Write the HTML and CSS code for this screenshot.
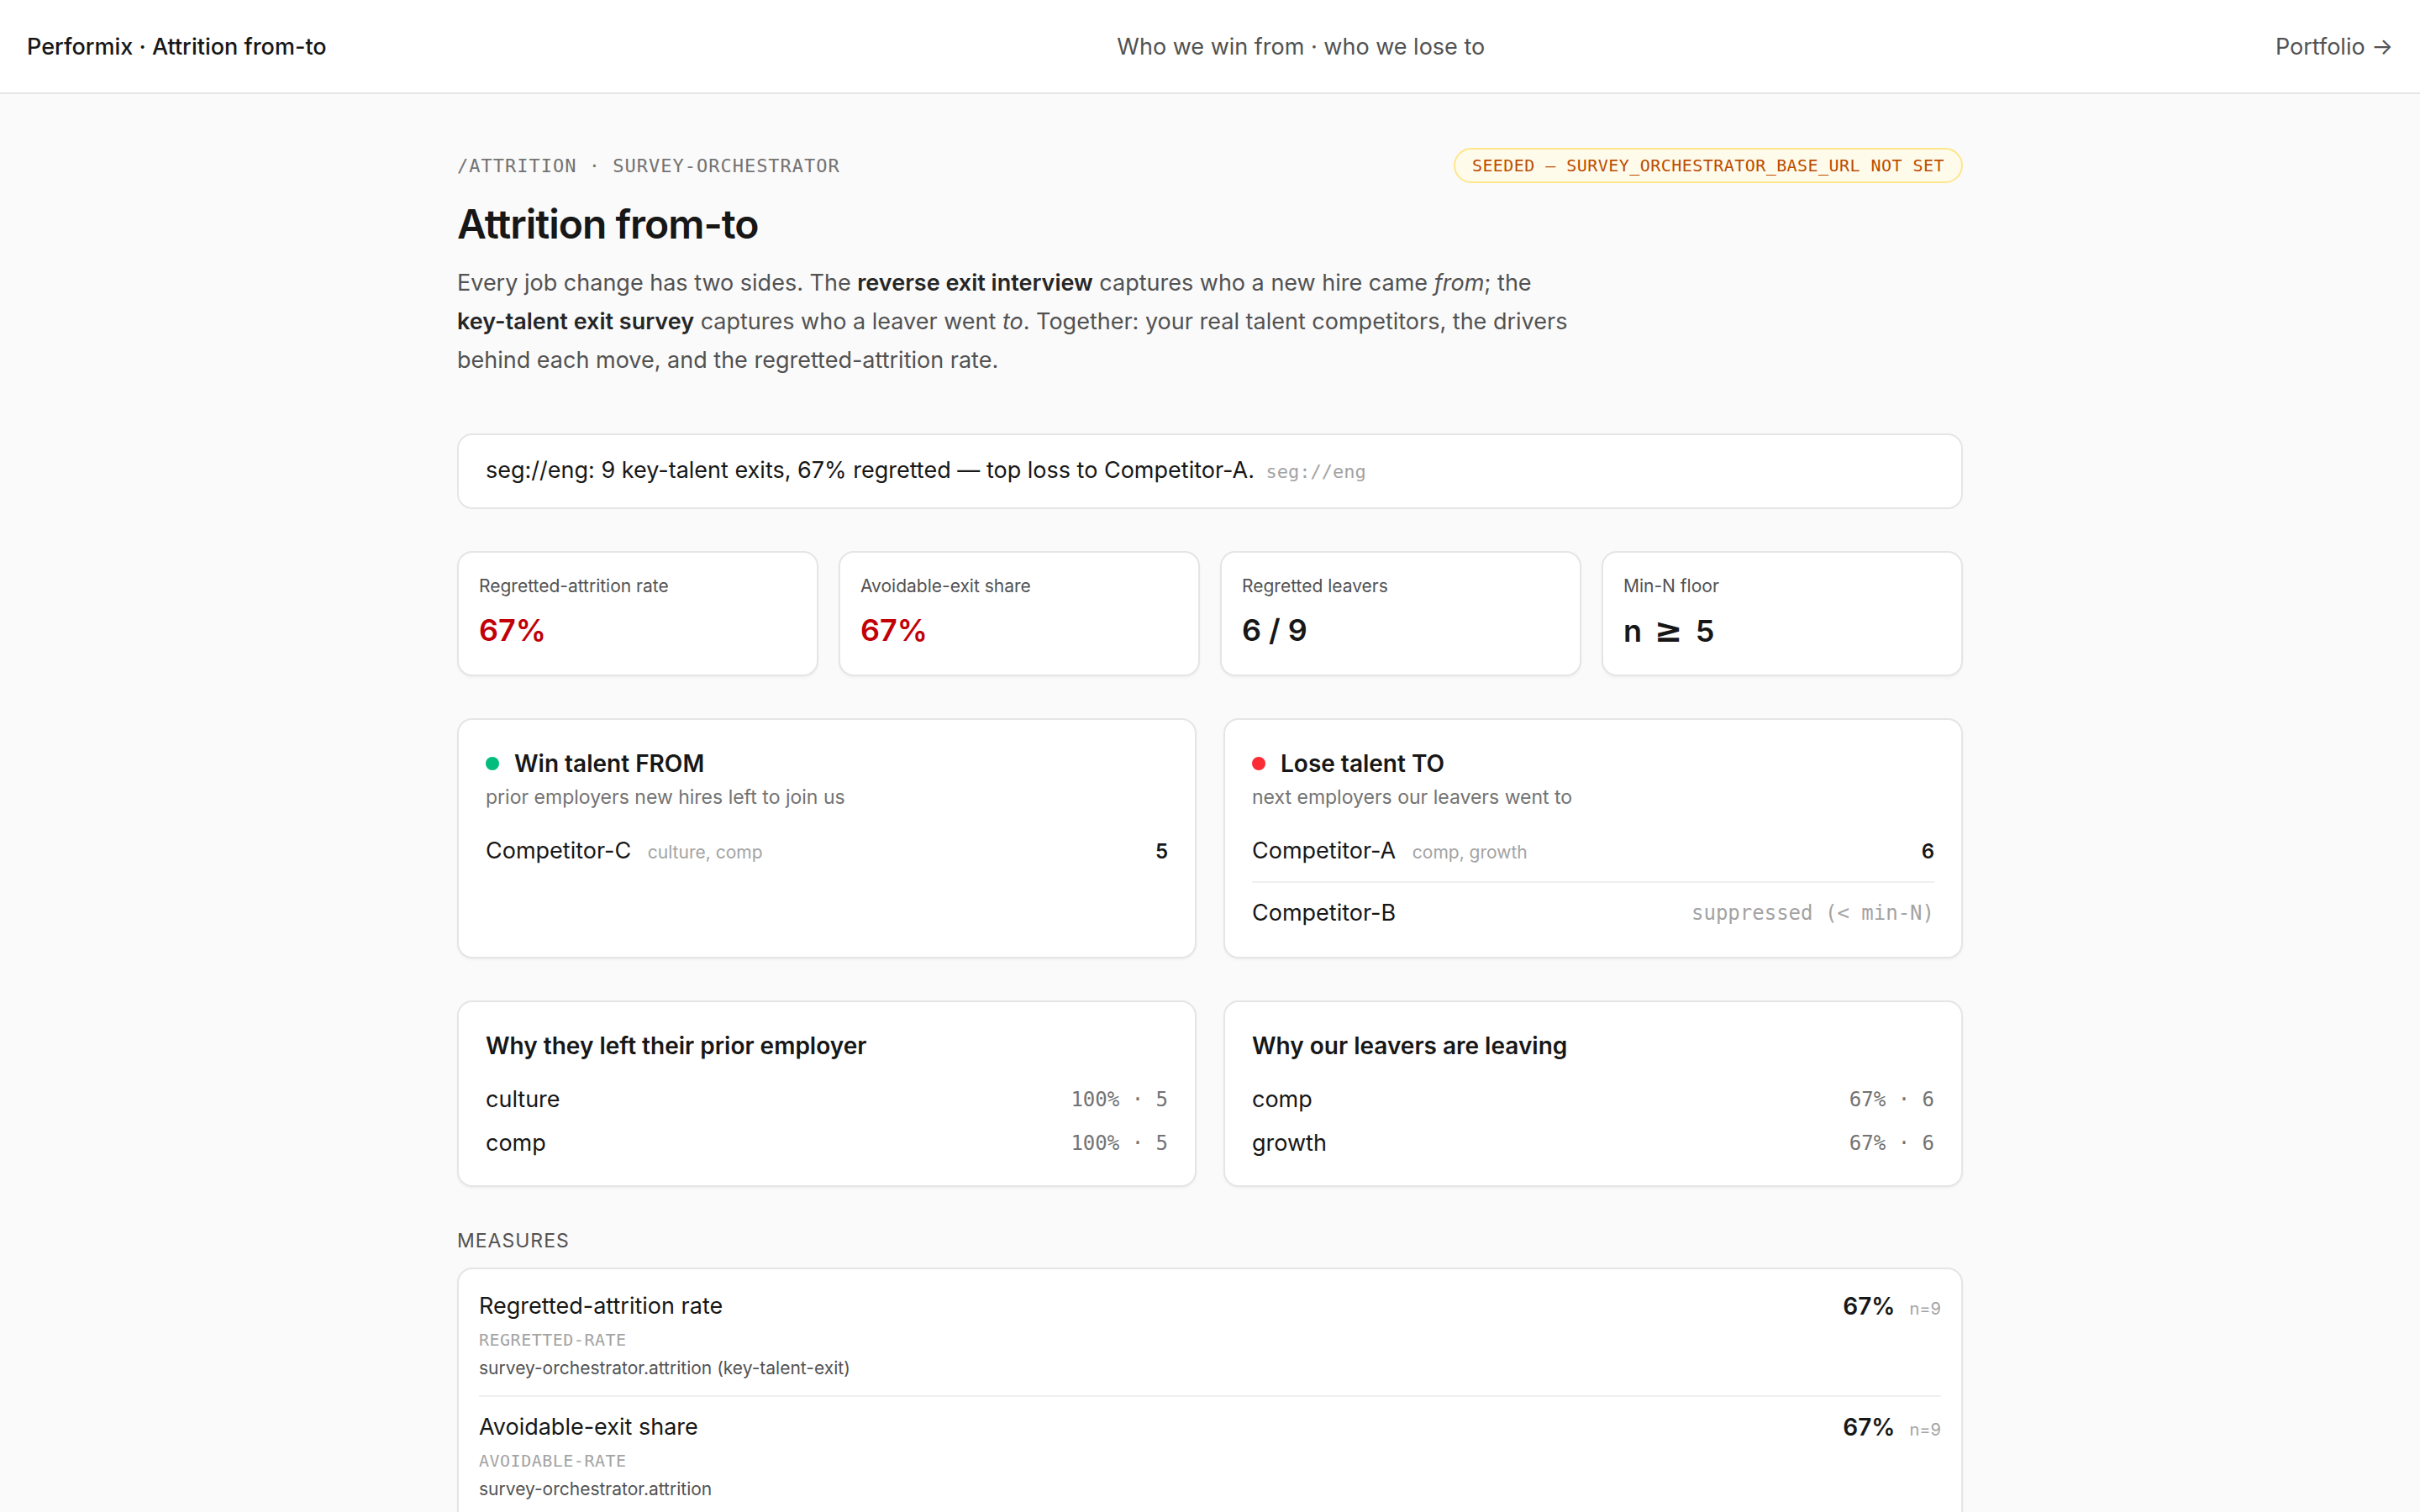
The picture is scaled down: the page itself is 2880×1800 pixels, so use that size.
FILE: index.html
```html
<!DOCTYPE html>
<html>
<head>
  <title>Performix · Attrition from-to</title>
  <link rel="stylesheet" href="styles.css">
</head>
<body>
  <header class="topbar">
    <div class="brand">Performix · Attrition from-to</div>
    <div class="tagline">Who we win from · who we lose to</div>
    <a class="back" href="#">Portfolio →</a>
  </header>

  <main class="page">
    <div class="crumbs">
      <span class="path">/attrition · survey-orchestrator</span>
      <span class="badge">seeded — SURVEY_ORCHESTRATOR_BASE_URL not set</span>
    </div>

    <h1>Attrition from-to</h1>
    <p class="lede">
      Every job change has two sides. The <b>reverse exit interview</b> captures who a new hire came <i>from</i>; the
      <b>key-talent exit survey</b> captures who a leaver went <i>to</i>. Together: your real talent competitors, the drivers
      behind each move, and the regretted-attrition rate.
    </p>

    <div class="summary">
      seg://eng: 9 key-talent exits, 67% regretted — top loss to Competitor-A.
      <span class="seg">seg://eng</span>
    </div>

    <!-- headline numbers -->
    <div class="kpis">
      <div class="kpi">
        <div class="kpi-label">Regretted-attrition rate</div>
        <div class="kpi-value bad">67%</div>
      </div>
      <div class="kpi">
        <div class="kpi-label">Avoidable-exit share</div>
        <div class="kpi-value bad">67%</div>
      </div>
      <div class="kpi">
        <div class="kpi-label">Regretted leavers</div>
        <div class="kpi-value">6 / 9</div>
      </div>
      <div class="kpi">
        <div class="kpi-label">Min-N floor</div>
        <div class="kpi-value">n <span class="ge">≥</span> 5</div>
      </div>
    </div>

    <!-- from / to -->
    <div class="pair">
      <div class="card">
        <div class="card-title"><span class="dot win"></span>Win talent FROM</div>
        <div class="card-sub">prior employers new hires left to join us</div>
        <ul class="list">
          <li>
            <span class="who">Competitor-C <span class="why">culture, comp</span></span>
            <span class="count">5</span>
          </li>
        </ul>
      </div>
      <div class="card">
        <div class="card-title"><span class="dot lose"></span>Lose talent TO</div>
        <div class="card-sub">next employers our leavers went to</div>
        <ul class="list">
          <li>
            <span class="who">Competitor-A <span class="why">comp, growth</span></span>
            <span class="count">6</span>
          </li>
          <li>
            <span class="who">Competitor-B</span>
            <span class="muted">suppressed (&lt; min-N)</span>
          </li>
        </ul>
      </div>
    </div>

    <!-- drivers -->
    <div class="pair">
      <div class="card">
        <div class="card-title">Why they left their prior employer</div>
        <div class="reasons">
          <div class="reason"><span>culture</span><span class="share">100% · 5</span></div>
          <div class="reason"><span>comp</span><span class="share">100% · 5</span></div>
        </div>
      </div>
      <div class="card">
        <div class="card-title">Why our leavers are leaving</div>
        <div class="reasons">
          <div class="reason"><span>comp</span><span class="share">67% · 6</span></div>
          <div class="reason"><span>growth</span><span class="share">67% · 6</span></div>
        </div>
      </div>
    </div>

    <h2 class="section">Measures</h2>
    <div class="measures">
      <div class="measure">
        <div>
          <div class="m-name">Regretted-attrition rate</div>
          <div class="m-key">regretted-rate</div>
          <div class="m-src">survey-orchestrator.attrition (key-talent-exit)</div>
        </div>
        <div class="m-val">67% <span class="m-n">n=9</span></div>
      </div>
      <div class="measure">
        <div>
          <div class="m-name">Avoidable-exit share</div>
          <div class="m-key">avoidable-rate</div>
          <div class="m-src">survey-orchestrator.attrition</div>
        </div>
        <div class="m-val">67% <span class="m-n">n=9</span></div>
      </div>
      <div class="measure">
        <div>
          <div class="m-name">Regretted leavers</div>
          <div class="m-key">regretted-count</div>
          <div class="m-src">survey-orchestrator.attrition</div>
        </div>
        <div class="m-val">6 <span class="m-n">n=9</span></div>
      </div>
    </div>
  </main>
</body>
</html>
```

FILE: styles.css
```css
body {
  margin: 0;
  background-color: #fafafa;
  color: #171717;
  font-family: Inter, "Noto Sans", sans-serif;
}

.topbar {
  display: flex;
  align-items: center;
  justify-content: space-between;
  height: 110px;
  padding: 0 32px;
  background-color: #ffffff;
  border-bottom: 2px solid #e5e5e5;
  font-size: 27px;
}

.brand {
  font-weight: 500;
}

.tagline {
  color: #525252;
}

.back {
  color: #525252;
  text-decoration: none;
}

.page {
  max-width: 1792px;
  margin: 0 auto;
  padding: 64px 0 80px;
}

.crumbs {
  display: flex;
  align-items: center;
  justify-content: space-between;
}

.path {
  font-family: "DejaVu Sans Mono", monospace;
  font-size: 22px;
  letter-spacing: 1px;
  text-transform: uppercase;
  color: #737373;
}

.badge {
  padding: 6px 20px;
  border: 2px solid #fde68a;
  border-radius: 999px;
  background-color: #fffbeb;
  color: #bb4d00;
  font-family: "DejaVu Sans Mono", monospace;
  font-size: 20px;
  line-height: 26px;
  letter-spacing: 0.45px;
  text-transform: uppercase;
}

h1 {
  margin: 20px 0 0;
  font-size: 48px;
  line-height: 58px;
  font-weight: 600;
  letter-spacing: -1px;
}

.lede {
  max-width: 1344px;
  margin: 18px 0 0;
  font-size: 27px;
  line-height: 46px;
  color: #525252;
}

.lede b {
  font-weight: 600;
  color: #262626;
  white-space: nowrap;
}

.summary {
  margin-top: 64px;
  padding: 24px 32px;
  background-color: #ffffff;
  border: 2px solid #e5e5e5;
  border-radius: 18px;
  font-size: 27px;
  line-height: 36px;
}

.seg {
  margin-left: 6px;
  font-family: "DejaVu Sans Mono", monospace;
  font-size: 22px;
  color: #a3a3a3;
}

.kpis {
  display: grid;
  grid-template-columns: repeat(4, 1fr);
  gap: 24px;
  margin-top: 50px;
}

.kpi,
.card,
.measures {
  background-color: #ffffff;
  border: 2px solid #e5e5e5;
  border-radius: 18px;
  box-shadow: 0 2px 3px rgba(0, 0, 0, 0.04);
}

.kpi {
  padding: 24px;
}

.kpi-label {
  font-size: 21px;
  line-height: 32px;
  color: #525252;
}

.kpi-value {
  margin-top: 8px;
  font-size: 36px;
  line-height: 56px;
  font-weight: 600;
}

.kpi-value.bad {
  color: #c10007;
}

.ge {
  margin: 0 6px;
  font-family: "DejaVu Sans", sans-serif;
  font-weight: 700;
  font-size: 40px;
}

.pair {
  display: grid;
  grid-template-columns: 1fr 1fr;
  gap: 32px;
  margin-top: 50px;
}

.card {
  padding: 32px;
}

.card-title {
  display: flex;
  align-items: center;
  font-size: 28px;
  line-height: 40px;
  font-weight: 600;
}

.dot {
  width: 16px;
  height: 16px;
  margin-right: 18px;
  border-radius: 50%;
}

.dot.win {
  background-color: #00bc7d;
}

.dot.lose {
  background-color: #fb2c36;
}

.card-sub {
  margin-top: 4px;
  font-size: 23px;
  line-height: 32px;
  color: #737373;
}

.list {
  list-style: none;
  margin: 12px 0 0;
  padding: 0;
}

.list li {
  display: flex;
  align-items: center;
  justify-content: space-between;
  height: 40px;
  padding: 16px 0;
  border-top: 2px solid #f0f0f0;
}

.list li:first-child {
  border-top: none;
}

.list li:last-child {
  padding-bottom: 0;
}

.who {
  font-size: 27px;
  line-height: 40px;
}

.why {
  margin-left: 12px;
  font-size: 21px;
  line-height: 1;
  color: #a3a3a3;
}

.count {
  font-size: 24px;
  font-weight: 600;
}

.muted {
  font-family: "DejaVu Sans Mono", monospace;
  font-size: 24px;
  color: #a3a3a3;
}

.reasons {
  margin: 18px 0 -8px;
}

.reason {
  display: flex;
  align-items: center;
  justify-content: space-between;
  padding: 6px 0;
  font-size: 27px;
  line-height: 40px;
}

.share {
  font-family: "DejaVu Sans Mono", monospace;
  font-size: 24px;
  color: #737373;
}

.section {
  margin: 48px 0 16px;
  font-size: 23px;
  line-height: 32px;
  font-weight: 400;
  letter-spacing: 1px;
  text-transform: uppercase;
  color: #525252;
}

.measures {
  padding: 8px 24px;
}

.measure {
  display: flex;
  justify-content: space-between;
  align-items: flex-start;
  padding: 16px 0 18px;
  border-top: 2px solid #f0f0f0;
}

.measure:first-child {
  border-top: none;
}

.m-name {
  font-size: 27px;
  line-height: 40px;
}

.m-key {
  margin-top: 6px;
  font-family: "DejaVu Sans Mono", monospace;
  font-size: 20px;
  line-height: 28px;
  letter-spacing: 0.5px;
  text-transform: uppercase;
  color: #a3a3a3;
}

.m-src {
  margin-top: 6px;
  font-size: 21px;
  line-height: 28px;
  color: #525252;
}

.m-val {
  font-size: 28px;
  line-height: 40px;
  font-weight: 600;
}

.m-n {
  margin-left: 10px;
  font-size: 20px;
  font-weight: 400;
  color: #a3a3a3;
}
```
